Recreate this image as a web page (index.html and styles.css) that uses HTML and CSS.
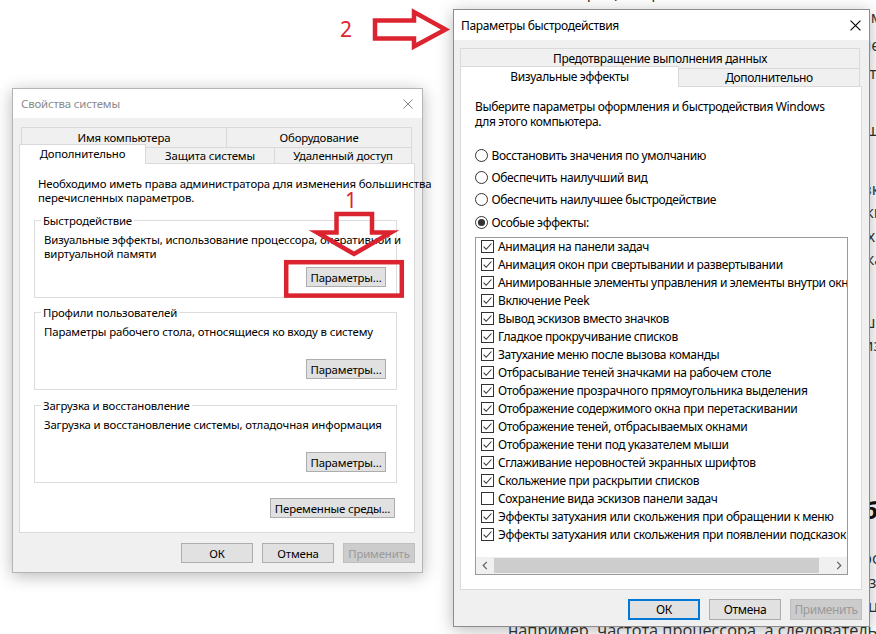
FILE: index.html
```html
<!DOCTYPE html>
<html lang="ru">

<head>
    <meta charset="utf-8">
    <title>Параметры быстродействия</title>
    <link rel="stylesheet" href="styles.css">
</head>

<body>
    <svg class="defs" width="0" height="0">
        <symbol id="ico-x" viewBox="0 0 10 10">
            <path d="M0.5 0.5L9.5 9.5M9.5 0.5L0.5 9.5" fill="none" stroke="currentColor" stroke-width="1" />
        </symbol>
        <symbol id="ico-box-on" viewBox="0 0 13 13">
            <rect x="0.5" y="0.5" width="12" height="12" fill="#fff" stroke="#333" />
            <path d="M2.6 6.6L5.2 9.3L10.4 3.5" fill="none" stroke="#333" stroke-width="1.1" />
        </symbol>
        <symbol id="ico-box-off" viewBox="0 0 13 13">
            <rect x="0.5" y="0.5" width="12" height="12" fill="#fff" stroke="#333" />
        </symbol>
        <symbol id="ico-radio-off" viewBox="0 0 13 13">
            <circle cx="6.5" cy="6.5" r="6" fill="#fff" stroke="#333" />
        </symbol>
        <symbol id="ico-radio-on" viewBox="0 0 13 13">
            <circle cx="6.5" cy="6.5" r="6" fill="#fff" stroke="#333" />
            <circle cx="6.5" cy="6.5" r="3.6" fill="#333" />
        </symbol>
        <symbol id="ico-left" viewBox="0 0 6 9">
            <path d="M4.8 0.8L1.2 4.5L4.8 8.2" fill="none" stroke="#606060" stroke-width="1.2" />
        </symbol>
        <symbol id="ico-right" viewBox="0 0 6 9">
            <path d="M1.2 0.8L4.8 4.5L1.2 8.2" fill="none" stroke="#606060" stroke-width="1.2" />
        </symbol>
    </svg>

    <!-- article text behind the windows -->
    <div class="article">
        <p class="a-top">частоты процессора</p>
        <ul class="a-list">
            <li>быстродействие системы в целом зависит от многих параметров</li>
            <li>в том числе от настроек визуального оформления рабочего стола</li>
            <li>и от того, какие эффекты включены в параметрах быстродействия</li>
        </ul>
        <p class="a-one">Если компьютер слабый, часть эффектов лучше выключить совсем</p>
        <p class="a-par">Откройте свойства системы и перейдите на вкладку «Дополнительно»,
            <br>затем в разделе «Быстродействие» нажмите кнопку «Параметры»
            <br>Средство показывает список всех визуальных эффектов оболочки
            <br>и позволяет быстро отключить те, что нагружают видеокарту
        </p>
        <p class="a-par2">В окне выберите пункт «Обеспечить наилучшее быстродействие»
            <br>либо снимите флажки вручную и сохраните изменения кнопкой
        </p>
        <h3 class="a-head">Как ещё можно ускорить работу компьютера и системы Windows</h3>
        <p class="a-last">Дополнительно стоит проверить план электропитания, так как
            <br>в режиме экономии энергии снижается производительность системы,
            <br>ограничиваются ресурсы, которые получает центральный процессор,
            <br>например, частота процессора, а следовательно и скорость работы
        </p>
    </div>

    <div class="window win-sys">
        <div class="titlebar">
            <span>Свойства системы</span>
            <svg class="close"><use href="#ico-x" /></svg>
        </div>
        <div class="client">
            <div class="tab-row back">
                <div class="tab t-name">Имя компьютера</div>
                <div class="tab t-hw">Оборудование</div>
            </div>
            <div class="tab-row front">
                <div class="tab active t-adv">Дополнительно</div>
                <div class="tab t-prot">Защита системы</div>
                <div class="tab t-remote">Удаленный доступ</div>
            </div>
            <div class="panel">
                <p class="intro">Необходимо иметь права администратора для изменения большинства<br>перечисленных параметров.</p>

                <div class="group">
                    <div class="group-title">Быстродействие</div>
                    <p class="group-text">Визуальные эффекты, использование процессора, оперативной и<br>виртуальной памяти</p>
                    <button class="btn btn-params">Параметры...</button>
                </div>

                <div class="group profiles">
                    <div class="group-title">Профили пользователей</div>
                    <p class="group-text">Параметры рабочего стола, относящиеся ко входу в систему</p>
                    <button class="btn btn-params">Параметры...</button>
                </div>

                <div class="group">
                    <div class="group-title">Загрузка и восстановление</div>
                    <p class="group-text">Загрузка и восстановление системы, отладочная информация</p>
                    <button class="btn btn-params">Параметры...</button>
                </div>

                <button class="btn btn-env">Переменные среды...</button>
            </div>
            <div class="footer">
                <button class="btn">ОК</button>
                <button class="btn">Отмена</button>
                <button class="btn" disabled>Применить</button>
            </div>
        </div>
    </div>

    <div class="window win-perf">
        <div class="titlebar">
            <span>Параметры быстродействия</span>
            <svg class="close"><use href="#ico-x" /></svg>
        </div>
        <div class="client">
            <div class="tab-row back">
                <div class="tab t-dep">Предотвращение выполнения данных</div>
            </div>
            <div class="tab-row front">
                <div class="tab active t-vis">Визуальные эффекты</div>
                <div class="tab t-more">Дополнительно</div>
            </div>
            <div class="panel">
                <p class="intro">Выберите параметры оформления и быстродействия Windows<br>для этого компьютера.</p>

                <div class="options">
                    <label class="radio"><svg><use href="#ico-radio-off" /></svg>Восстановить значения по умолчанию</label>
                    <label class="radio"><svg><use href="#ico-radio-off" /></svg>Обеспечить наилучший вид</label>
                    <label class="radio"><svg><use href="#ico-radio-off" /></svg>Обеспечить наилучшее быстродействие</label>
                    <label class="radio"><svg><use href="#ico-radio-on" /></svg>Особые эффекты:</label>
                </div>

                <div class="list">
                    <div class="items">
                        <div class="item"><svg><use href="#ico-box-on" /></svg>Анимация на панели задач</div>
                        <div class="item"><svg><use href="#ico-box-on" /></svg>Анимация окон при свертывании и развертывании</div>
                        <div class="item"><svg><use href="#ico-box-on" /></svg>Анимированные элементы управления и элементы внутри окна</div>
                        <div class="item"><svg><use href="#ico-box-on" /></svg>Включение Peek</div>
                        <div class="item"><svg><use href="#ico-box-on" /></svg>Вывод эскизов вместо значков</div>
                        <div class="item"><svg><use href="#ico-box-on" /></svg>Гладкое прокручивание списков</div>
                        <div class="item"><svg><use href="#ico-box-on" /></svg>Затухание меню после вызова команды</div>
                        <div class="item"><svg><use href="#ico-box-on" /></svg>Отбрасывание теней значками на рабочем столе</div>
                        <div class="item"><svg><use href="#ico-box-on" /></svg>Отображение прозрачного прямоугольника выделения</div>
                        <div class="item"><svg><use href="#ico-box-on" /></svg>Отображение содержимого окна при перетаскивании</div>
                        <div class="item"><svg><use href="#ico-box-on" /></svg>Отображение теней, отбрасываемых окнами</div>
                        <div class="item"><svg><use href="#ico-box-on" /></svg>Отображение тени под указателем мыши</div>
                        <div class="item"><svg><use href="#ico-box-on" /></svg>Сглаживание неровностей экранных шрифтов</div>
                        <div class="item"><svg><use href="#ico-box-on" /></svg>Скольжение при раскрытии списков</div>
                        <div class="item"><svg><use href="#ico-box-off" /></svg>Сохранение вида эскизов панели задач</div>
                        <div class="item"><svg><use href="#ico-box-on" /></svg>Эффекты затухания или скольжения при обращении к меню</div>
                        <div class="item"><svg><use href="#ico-box-on" /></svg>Эффекты затухания или скольжения при появлении подсказок</div>
                    </div>
                    <div class="hscroll">
                        <div class="arrow"><svg><use href="#ico-left" /></svg></div>
                        <div class="track"><div class="thumb"></div></div>
                        <div class="arrow"><svg><use href="#ico-right" /></svg></div>
                    </div>
                </div>
            </div>
            <div class="footer">
                <button class="btn default">ОК</button>
                <button class="btn">Отмена</button>
                <button class="btn" disabled>Применить</button>
            </div>
        </div>
    </div>

    <!-- red annotations drawn over the screenshot -->
    <svg class="marks" width="876" height="634" viewBox="0 0 876 634">
        <text class="mark-num" x="340" y="37">2</text>
        <polygon points="375,20.5 414,20.5 414,12 445.5,29.5 414,46.5 414,38.5 375,38.5" />
        <text class="mark-num" x="345" y="208">1</text>
        <polygon points="336.5,214 372,214 372,232.5 391,232.5 354,254 317,232.5 336.5,232.5" />
        <rect x="286.2" y="262.2" width="115.6" height="33.4" />
    </svg>
</body>

</html>
```

FILE: styles.css
```css
* {
    margin: 0;
    padding: 0;
    box-sizing: border-box;
}

body {
    position: relative;
    width: 876px;
    height: 634px;
    overflow: hidden;
    background: #fff;
    color: #000;
    font-family: "Noto Sans", "Liberation Sans", sans-serif;
}

.defs {
    position: absolute;
}

/* article behind */
.article {
    position: absolute;
    left: 508px;
    top: -20px;
    color: #333;
    font-family: "Open Sans", "Noto Sans", sans-serif;
    font-size: 16.3px;
    line-height: 24px;
    white-space: nowrap;
}

.a-list {
    list-style: none;
    margin-top: -1px;
    line-height: 28px;
}

.a-one {
    margin-top: 31px;
}

.a-par {
    margin-top: 36px;
    line-height: 23.4px;
}

.a-par2 {
    margin-top: 39px;
    line-height: 23px;
}

.a-head {
    margin-top: 137px;
    font-size: 24px;
    line-height: 32px;
    color: #111;
}

.a-last {
    margin-top: 20px;
}

/* windows */
.window {
    position: absolute;
    display: flex;
    flex-direction: column;
    background: #f0f0f0;
    box-shadow: 0 3px 16px rgba(0, 0, 0, 0.28);
}

.win-sys {
    left: 12px;
    top: 88px;
    width: 411px;
    height: 485px;
    border: 1px solid #b4b4b4;
    font-size: 11.4px;
    letter-spacing: -0.15px;
}

.win-perf {
    left: 453px;
    top: 9px;
    width: 417px;
    height: 618px;
    border: 1px solid #8c8c8c;
    font-size: 12px;
    letter-spacing: -0.35px;
}

.titlebar {
    flex: none;
    display: flex;
    align-items: center;
    justify-content: space-between;
    background: #fff;
}

.win-sys .titlebar {
    height: 29px;
    padding: 0 9px 0 8px;
    color: #8a8a8a;
}

.win-perf .titlebar {
    height: 30px;
    padding: 0 8px 0 7px;
}

.close {
    width: 10px;
    height: 10px;
}

.win-perf .close {
    width: 11px;
    height: 11px;
}

.client {
    flex: 1;
    display: flex;
    flex-direction: column;
}

.win-sys .client {
    padding: 9px 7px 0 6px;
}

.win-perf .client {
    padding: 8px 7px 0 6px;
}

/* tabs */
.tab-row {
    display: flex;
}

.tab-row.front {
    align-items: flex-end;
}

.tab {
    display: flex;
    align-items: center;
    justify-content: center;
    background: #f0f0f0;
    border: 1px solid #d9d9d9;
    border-bottom: none;
    white-space: nowrap;
}

.tab + .tab {
    margin-left: -1px;
}

.front .tab {
    height: 100%;
}

.front .tab.active {
    position: relative;
    z-index: 1;
    background: #fff;
    margin-bottom: -1px;
}

.win-sys .back {
    height: 20px;
    margin-left: 2px;
}

.win-sys .front {
    height: 16px;
}

.win-sys .front .tab.active {
    height: 20px;
    padding-bottom: 2px;
}

.t-name { width: 206px; }
.t-hw { width: 186px; }
.t-adv { width: 127px; }
.t-prot { width: 130px; }
.t-remote { width: 138px; }

.win-perf .back {
    height: 20px;
}

.win-perf .front {
    height: 18px;
}

.win-perf .front .tab.active {
    height: 21px;
    padding-bottom: 2px;
}

.t-dep { width: 400px; }
.t-vis { width: 219px; }
.t-more { width: 182px; }

/* panels */
.panel {
    display: flex;
    flex-direction: column;
    background: #fff;
    border: 1px solid #d9d9d9;
}

.win-sys .panel {
    height: 370px;
    padding: 13px 17px 0 14px;
}

.win-perf .panel {
    height: 504px;
    padding: 12px 13px 0 14px;
}

.intro {
    white-space: nowrap;
}

.win-sys .intro {
    margin-left: 4px;
    line-height: 14px;
}

.win-perf .intro {
    line-height: 15px;
}

.group {
    display: flex;
    flex-direction: column;
    height: 78px;
    margin-top: 15px;
    padding: 0 10px 10px 9px;
    border: 1px solid #dcdcdc;
}

.group.profiles {
    margin-top: 14px;
}

.group-title {
    align-self: flex-start;
    margin: -7px 0 0 -3px;
    padding: 0 2px;
    background: #fff;
    line-height: 14px;
}

.group-text {
    margin-top: 5px;
    line-height: 14px;
    white-space: nowrap;
}

.group .btn {
    margin-top: auto;
    align-self: flex-end;
}

/* buttons */
.btn {
    display: flex;
    align-items: center;
    justify-content: center;
    height: 20px;
    font: inherit;
    letter-spacing: inherit;
    color: #000;
    background: #e1e1e1;
    border: 1px solid #adadad;
}

.btn-params {
    width: 80px;
}

.btn-env {
    align-self: flex-end;
    width: 125px;
    margin: 15px 2px 0 0;
}

.btn.default {
    border: 2px solid #0078d7;
}

.btn:disabled {
    background: #cccccc;
    border-color: #bfbfbf;
    color: #9a9a9a;
}

.footer {
    display: flex;
    justify-content: flex-end;
    gap: 9px;
}

.footer .btn {
    width: 72px;
}

.win-sys .footer {
    margin-top: 10px;
}

.win-perf .footer {
    margin-top: 9px;
}

.win-perf .footer .btn {
    height: 21px;
}

/* visual effects page */
.options {
    margin-top: 15px;
}

.radio {
    display: flex;
    align-items: center;
    gap: 3.5px;
    height: 22.4px;
}

.radio svg,
.item svg {
    flex: none;
    width: 13px;
    height: 13px;
}

.list {
    display: flex;
    flex-direction: column;
    height: 338px;
    margin-top: 3px;
    border: 1px solid #9a9a9a;
}

.items {
    flex: 1;
    overflow: hidden;
    padding-left: 5px;
}

.item {
    display: flex;
    align-items: center;
    gap: 4px;
    height: 18px;
    white-space: nowrap;
}

.hscroll {
    display: flex;
    height: 17px;
    background: #f0f0f0;
}

.arrow {
    display: flex;
    align-items: center;
    justify-content: center;
    width: 17px;
}

.arrow svg {
    width: 6px;
    height: 9px;
}

.track {
    flex: 1;
    display: flex;
    padding: 1px 11px 1px 1px;
}

.thumb {
    width: 325px;
    background: #cdcdcd;
}

/* annotations */
.marks {
    position: absolute;
    left: 0;
    top: 0;
    pointer-events: none;
}

.marks polygon,
.marks rect {
    fill: none;
    stroke: #dc2430;
    stroke-width: 4.5;
}

.mark-num {
    fill: #dc2430;
    font-family: "Noto Sans", sans-serif;
    font-size: 21px;
}
```
